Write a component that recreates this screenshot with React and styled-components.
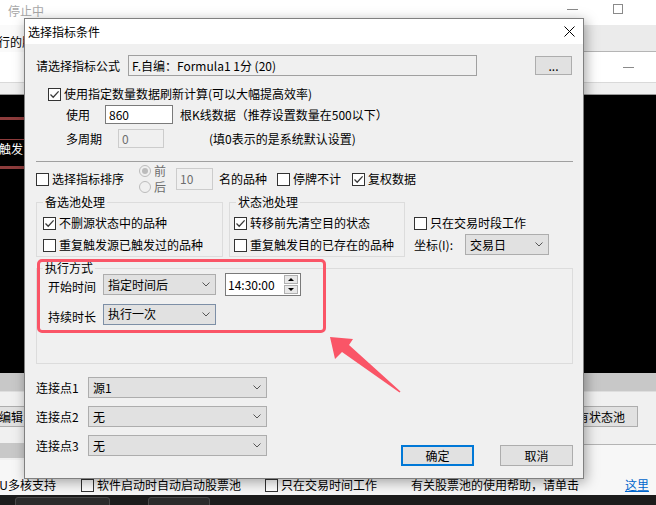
import React from 'react';
import styled, { createGlobalStyle } from 'styled-components';

const GlobalStyle = createGlobalStyle`
  html, body {
    margin: 0;
    padding: 0;
    background: #fff;
  }
  body {
    font-family: "Noto Sans CJK SC", "Liberation Sans", sans-serif;
    font-size: 12px;
    color: #000;
  }
  * {
    box-sizing: border-box;
  }
`;

const accent = '#fa5567';

/* ---------- the application window behind the dialog ---------- */

const Screen = styled.div`
  position: relative;
  width: 656px;
  height: 505px;
  overflow: hidden;
  display: flex;
  flex-direction: column;
  background: #f0f0f0;
`;

const AppTitleBar = styled.div`
  flex: none;
  height: 25px;
  display: flex;
  align-items: center;
  padding-left: 8px;
  background: #fff;
`;

const AppTitle = styled.span`
  color: #a8a8a8;
  line-height: 14px;
  margin-top: -4px;
`;

const WinControls = styled.div`
  display: flex;
  margin-left: auto;
  padding-right: 15px;
  height: 100%;
`;

const WinButton = styled.div`
  width: 46px;
  height: 100%;
  display: flex;
  justify-content: center;
  align-items: flex-start;
`;

const MinGlyph = styled.span`
  width: 11px;
  height: 1px;
  margin-top: 9px;
  background: #8a8a8a;
`;

const MaxGlyph = styled.span`
  width: 10px;
  height: 10px;
  margin-top: 4px;
  border: 1px solid #8a8a8a;
`;

const TabStrip = styled.div`
  flex: none;
  height: 27px;
  display: flex;
`;

const TabLeft = styled.div`
  width: 24px;
  background: #fafafa;
  display: flex;
  align-items: center;
  overflow: hidden;
`;

const TabText = styled.span`
  margin-left: -14px;
  margin-top: 7px;
  line-height: 14px;
  white-space: nowrap;
`;

const TabRight = styled.div`
  flex: 1;
  background: #ebebeb;
  border-bottom: 1px solid #b5b5b5;
`;

const SubBar = styled.div`
  flex: none;
  height: 30px;
  display: flex;
  align-items: center;
  background: #fff;
`;

const SubMin = styled.span`
  width: 11px;
  height: 1px;
  background: #8a8a8a;
  margin-left: auto;
  margin-right: 22px;
`;

const HeaderGap = styled.div`
  flex: none;
  height: 13px;
  background: #f0f0f0;
  border-top: 1px solid #d9d9d9;
  border-bottom: 1px solid #9a9a9a;
`;

const Chart = styled.div`
  flex: none;
  height: 278px;
  background: #000;
  display: flex;
  flex-direction: column;
  padding-top: 22px;
`;

const RedRule = styled.div`
  width: 300px;
  height: ${p => p.$h || 3}px;
  margin-top: ${p => p.$mt || 0}px;
  background: #8e3c3c;
`;

const ChartText = styled.span`
  color: #fff;
  line-height: 12px;
  margin: 3px 0 0 -1px;
`;

const GreyStrip = styled.div`
  flex: none;
  height: 19px;
  background: #c8c8c8;
  border-bottom: 1px solid #dedede;
`;

const ToolPanel = styled.div`
  flex: none;
  height: 48px;
  display: flex;
  align-items: center;
  justify-content: space-between;
  background: #f0f0f0;
`;

const PanelButton = styled.div`
  flex: none;
  width: ${p => p.$w}px;
  height: 21px;
  margin-left: ${p => p.$ml || 0}px;
  margin-right: ${p => p.$mr || 0}px;
  display: flex;
  align-items: center;
  justify-content: center;
  background: #e1e1e1;
  border: 1px solid #adadad;
`;

const StripRow = styled.div`
  flex: none;
  height: 20px;
  display: flex;
`;

const StripLeft = styled.div`
  width: 24px;
  margin: 3px 0 2px;
  background: #c8c8c8;
`;

const StripRight = styled.div`
  flex: 1;
  display: flex;
  flex-direction: column;
`;

const StripTop = styled.div`
  height: 5px;
  background: #f0f0f0;
  border-bottom: 1px solid #b4b4b4;
`;

const StripBottom = styled.div`
  flex: 1;
  background: #f7f7f7;
`;

const OptionsRow = styled.div`
  flex: none;
  height: 35px;
  display: flex;
  align-items: center;
  padding-top: 15px;
  background: #f7f7f7;
  white-space: nowrap;
`;

const OptText = styled.span`
  flex: none;
  line-height: 14px;
  margin-left: ${p => p.$ml || 0}px;
`;

const HelpLink = styled.span`
  flex: none;
  line-height: 14px;
  margin-left: ${p => p.$ml || 0}px;
  color: #0066cc;
  text-decoration: underline;
`;

const StatusBar = styled.div`
  flex: none;
  height: 10px;
  display: flex;
  align-items: flex-start;
  background: #1c1c1c;
  padding-top: 2px;
`;

const StatusBox = styled.div`
  flex: none;
  width: ${p => p.$w}px;
  height: 12px;
  margin-left: ${p => p.$ml}px;
  border: 1px solid #4a4a4a;
  border-radius: 3px;
  background: #2b2b2b;
`;

/* ---------- dialog ---------- */

const Dialog = styled.div`
  position: absolute;
  left: 24px;
  top: 18px;
  width: 560px;
  height: 461px;
  display: flex;
  flex-direction: column;
  border: 1px solid #808080;
  background: #f0f0f0;
  box-shadow: 2px 3px 12px rgba(0, 0, 0, 0.35);
`;

const DlgTitleBar = styled.div`
  flex: none;
  height: 25px;
  display: flex;
  align-items: center;
  padding-left: 3px;
  background: #fff;
`;

const DlgTitle = styled.span`
  line-height: 14px;
`;

const CloseButton = styled.div`
  width: 28px;
  height: 100%;
  margin-left: auto;
  display: flex;
  align-items: center;
  justify-content: center;
`;

const DlgBody = styled.div`
  position: relative;
  flex: 1;
  display: flex;
  flex-direction: column;
  padding: 11px 10px 0 11px;
`;

const Row = styled.div`
  flex: none;
  display: flex;
  align-items: ${p => p.$align || 'center'};
  height: ${p => p.$h}px;
  margin-top: ${p => p.$mt || 0}px;
  padding-left: ${p => p.$indent || 0}px;
  white-space: nowrap;
`;

const Label = styled.span`
  flex: none;
  width: ${p => (p.$w ? `${p.$w}px` : 'auto')};
  margin-left: ${p => p.$ml || 0}px;
  padding-top: ${p => p.$dy || 0}px;
  line-height: 14px;
  white-space: nowrap;
`;

const TextField = styled.div`
  flex: none;
  width: ${p => p.$w}px;
  height: ${p => p.$h || 19}px;
  margin-left: ${p => p.$ml || 0}px;
  display: flex;
  align-items: center;
  padding-left: 3px;
  line-height: 14px;
  border: 1px solid ${p => (p.$disabled ? '#cccccc' : p.$readonly ? '#a0a0a0' : '#7a7a7a')};
  background: ${p => (p.$disabled || p.$readonly ? '#f0f0f0' : '#fff')};
  color: ${p => (p.$disabled ? '#6d6d6d' : '#000')};
`;

const PushButton = styled.div`
  flex: none;
  width: ${p => p.$w}px;
  height: ${p => p.$h || 21}px;
  margin-left: ${p => p.$ml || 0}px;
  display: flex;
  align-items: center;
  justify-content: center;
  line-height: 14px;
  background: #e1e1e1;
  border: ${p => (p.$default ? '2px solid #0078d7' : '1px solid #adadad')};
`;

const Separator = styled.div`
  flex: none;
  height: 1px;
  margin-top: 13px;
  background: #a0a0a0;
`;

const Box = styled.span`
  flex: none;
  width: 13px;
  height: 13px;
  display: flex;
  align-items: center;
  justify-content: center;
  border: 1px solid #333;
  background: #fff;
`;

const CheckLabel = styled.label`
  flex: none;
  display: flex;
  align-items: center;
  gap: 3px;
  height: ${p => p.$h || 16}px;
  margin-left: ${p => p.$ml || 0}px;
  line-height: 14px;
  white-space: nowrap;
`;

const CheckItem = ({ checked, children, ...rest }) => (
  <CheckLabel {...rest}>
    <Box>
      {checked && (
        <svg width="11" height="11" viewBox="0 0 11 11">
          <path d="M1.5 5.5 L4.2 8.2 L9.6 2.4" fill="none" stroke="#3a3a3a" strokeWidth="1.3" />
        </svg>
      )}
    </Box>
    <span>{children}</span>
  </CheckLabel>
);

const RadioColumn = styled.div`
  flex: none;
  display: flex;
  flex-direction: column;
  margin-left: ${p => p.$ml || 0}px;
`;

const RadioLabel = styled.label`
  display: flex;
  align-items: center;
  gap: 3px;
  height: 16px;
  line-height: 14px;
  color: #6d6d6d;
`;

const RadioDot = styled.span`
  flex: none;
  width: 12px;
  height: 12px;
  border-radius: 50%;
  border: 1px solid #bcbcbc;
  background: #f0f0f0;
  display: flex;
  align-items: center;
  justify-content: center;

  &::after {
    content: '';
    width: 6px;
    height: 6px;
    border-radius: 50%;
    background: ${p => (p.$on ? '#bcbcbc' : 'transparent')};
  }
`;

const SelectBox = styled.div`
  flex: none;
  width: ${p => p.$w}px;
  height: 21px;
  margin-left: ${p => p.$ml || 0}px;
  display: flex;
  align-items: center;
  padding: 0 5px 0 4px;
  line-height: 14px;
  background: #e1e1e1;
  border: 1px solid ${p => (p.$focus ? '#7d8fa6' : '#adadad')};

  svg {
    margin-left: auto;
  }
`;

const Select = ({ children, ...rest }) => (
  <SelectBox {...rest}>
    <span>{children}</span>
    <svg width="8" height="5" viewBox="0 0 8 5">
      <path d="M0.5 0.5 L4 4 L7.5 0.5" fill="none" stroke="#555" strokeWidth="1" />
    </svg>
  </SelectBox>
);

const GroupsRow = styled.div`
  flex: none;
  display: flex;
  align-items: flex-start;
  margin-top: 1px;
`;

const GroupBox = styled.fieldset`
  flex: none;
  width: ${p => p.$w}px;
  margin: ${p => p.$mt ?? 0}px 0 0 ${p => p.$ml ?? 0}px;
  padding: ${p => p.$pt ?? 5}px 0 ${p => p.$pb ?? 1}px ${p => p.$pl}px;
  min-width: 0;
  border: 1px solid #dcdcdc;
  display: flex;
  flex-direction: column;
  gap: ${p => p.$gap ?? 0}px;
`;

const Legend = styled.legend`
  padding: 0 2px;
  margin-left: ${p => p.$ml || 0}px;
  line-height: 12px;
  font-size: 12px;
`;

const SideColumn = styled.div`
  flex: none;
  display: flex;
  flex-direction: column;
  gap: 1px;
  margin-left: 9px;
  padding-top: 17px;
`;

const TimeField = styled.div`
  flex: none;
  width: 76px;
  height: 23px;
  margin-left: ${p => p.$ml || 0}px;
  display: flex;
  align-items: center;
  padding: 0 2px 0 2px;
  line-height: 14px;
  background: #fff;
  border: 1px solid #7a7a7a;
`;

const Spinner = styled.div`
  width: 14px;
  height: 19px;
  margin-left: auto;
  display: flex;
  flex-direction: column;
  gap: 1px;
`;

const SpinHalf = styled.div`
  flex: 1;
  display: flex;
  align-items: center;
  justify-content: center;
  background: #e8e8e8;
  border: 1px solid #b0b0b0;

  &::after {
    content: '';
    border-left: 3px solid transparent;
    border-right: 3px solid transparent;
    ${p => (p.$down ? 'border-top: 3px solid #000;' : 'border-bottom: 3px solid #000;')}
  }
`;

const Highlight = styled.div`
  position: absolute;
  left: 12px;
  top: 215px;
  width: 289px;
  height: 74px;
  border: 3px solid ${accent};
  border-radius: 5px;
  pointer-events: none;
`;

const BottomSection = styled.div`
  flex: none;
  display: flex;
  justify-content: space-between;
  align-items: flex-start;
  margin-top: 13px;
`;

const LinkColumn = styled.div`
  display: flex;
  flex-direction: column;
  gap: 8px;
`;

const ButtonRow = styled.div`
  display: flex;
  gap: 26px;
  margin-top: 68px;
`;

const ArrowLayer = styled.svg`
  position: absolute;
  left: 0;
  top: 0;
  pointer-events: none;
`;

export default function App() {
  return (
    <>
      <GlobalStyle />
      <Screen>
        <AppTitleBar>
          <AppTitle>停止中</AppTitle>
          <WinControls>
            <WinButton><MinGlyph /></WinButton>
            <WinButton><MaxGlyph /></WinButton>
          </WinControls>
        </AppTitleBar>
        <TabStrip>
          <TabLeft><TabText>运行的股票池</TabText></TabLeft>
          <TabRight />
        </TabStrip>
        <SubBar><SubMin /></SubBar>
        <HeaderGap />
        <Chart>
          <RedRule />
          <RedRule $mt={19} $h={1} />
          <ChartText>触发</ChartText>
          <RedRule $mt={11} />
        </Chart>
        <GreyStrip />
        <ToolPanel>
          <PanelButton $w={100} $ml={-51}>批量编辑</PanelButton>
          <PanelButton $w={110} $mr={18}>清空所有状态池</PanelButton>
        </ToolPanel>
        <StripRow>
          <StripLeft />
          <StripRight>
            <StripTop />
            <StripBottom />
          </StripRight>
        </StripRow>
        <OptionsRow>
          <OptText $ml={-16}>CPU多核支持</OptText>
          <CheckItem $ml={25}>软件启动时自动启动股票池</CheckItem>
          <CheckItem $ml={24}>只在交易时间工作</CheckItem>
          <OptText $ml={34}>有关股票池的使用帮助，请单击</OptText>
          <HelpLink $ml={46}>这里</HelpLink>
        </OptionsRow>
        <StatusBar>
          <StatusBox $w={95} $ml={15} />
          <StatusBox $w={62} $ml={38} />
        </StatusBar>

        <Dialog>
          <DlgTitleBar>
            <DlgTitle>选择指标条件</DlgTitle>
            <CloseButton>
              <svg width="11" height="11" viewBox="0 0 11 11">
                <path d="M0.5 0.5 L10.5 10.5 M10.5 0.5 L0.5 10.5" stroke="#000" strokeWidth="1" />
              </svg>
            </CloseButton>
          </DlgTitleBar>
          <DlgBody>
            <Row $h={21}>
              <Label $w={92}>请选择指标公式</Label>
              <TextField $w={349} $h={21} $readonly>F.自编：Formula1 1分 (20)</TextField>
              <PushButton $w={37} $h={19} $ml={58}>...</PushButton>
            </Row>
            <Row $h={16} $mt={10} $indent={12}>
              <CheckItem checked>使用指定数量数据刷新计算(可以大幅提高效率)</CheckItem>
            </Row>
            <Row $h={19} $mt={3} $indent={30}>
              <Label $w={39}>使用</Label>
              <TextField $w={68}>860</TextField>
              <Label $ml={7}>根K线数据（推荐设置数量在500以下）</Label>
            </Row>
            <Row $h={19} $mt={5} $indent={30}>
              <Label $w={52}>多周期</Label>
              <TextField $w={46} $disabled>0</TextField>
              <Label $ml={45}>(填0表示的是系统默认设置)</Label>
            </Row>
            <Separator />
            <Row $h={32} $mt={1}>
              <CheckItem>选择指标排序</CheckItem>
              <RadioColumn $ml={15}>
                <RadioLabel><RadioDot $on />前</RadioLabel>
                <RadioLabel><RadioDot />后</RadioLabel>
              </RadioColumn>
              <TextField $w={37} $h={22} $ml={10} $disabled>10</TextField>
              <Label $ml={6}>名的品种</Label>
              <CheckItem $ml={10}>停牌不计</CheckItem>
              <CheckItem $ml={11} checked>复权数据</CheckItem>
            </Row>
            <GroupsRow>
              <GroupBox $w={187} $pl={6} $gap={2}>
                <Legend>备选池处理</Legend>
                <CheckItem $h={20} checked>不删源状态中的品种</CheckItem>
                <CheckItem $h={20}>重复触发源已触发过的品种</CheckItem>
              </GroupBox>
              <GroupBox $w={176} $ml={6} $pl={4} $gap={2}>
                <Legend $ml={2}>状态池处理</Legend>
                <CheckItem $h={20} checked>转移前先清空目的状态</CheckItem>
                <CheckItem $h={20}>重复触发目的已存在的品种</CheckItem>
              </GroupBox>
              <SideColumn>
                <CheckItem $h={20}>只在交易时段工作</CheckItem>
                <Row $h={21}>
                  <Label $w={51}>坐标(I):</Label>
                  <Select $w={84}>交易日</Select>
                </Row>
              </SideColumn>
            </GroupsRow>
            <GroupBox $w={537} $mt={5} $pl={11} $pt={0} $pb={38}>
              <Legend $ml={-5}>执行方式</Legend>
              <Row $h={23} $mt={-1}>
                <Label $w={55} $dy={5}>开始时间</Label>
                <Select $w={113}>指定时间后</Select>
                <TimeField $ml={9}>
                  <span>14:30:00</span>
                  <Spinner>
                    <SpinHalf />
                    <SpinHalf $down />
                  </Spinner>
                </TimeField>
              </Row>
              <Row $h={22} $mt={7}>
                <Label $w={55} $dy={6}>持续时长</Label>
                <Select $w={113} $focus>执行一次</Select>
              </Row>
            </GroupBox>
            <BottomSection>
              <LinkColumn>
                <Row $h={21}>
                  <Label $w={52}>连接点1</Label>
                  <Select $w={179}>源1</Select>
                </Row>
                <Row $h={21}>
                  <Label $w={52}>连接点2</Label>
                  <Select $w={179}>无</Select>
                </Row>
                <Row $h={21}>
                  <Label $w={52}>连接点3</Label>
                  <Select $w={179}>无</Select>
                </Row>
              </LinkColumn>
              <ButtonRow>
                <PushButton $w={73} $default>确定</PushButton>
                <PushButton $w={73}>取消</PushButton>
              </ButtonRow>
            </BottomSection>
            <Highlight />
          </DlgBody>
        </Dialog>

        <ArrowLayer width="656" height="505" viewBox="0 0 656 505">
          <polygon
            points="330,337 353,339 349,345 400.5,391.5 399.5,392.5 342,352 335,359"
            fill={accent}
          />
        </ArrowLayer>
      </Screen>
    </>
  );
}
